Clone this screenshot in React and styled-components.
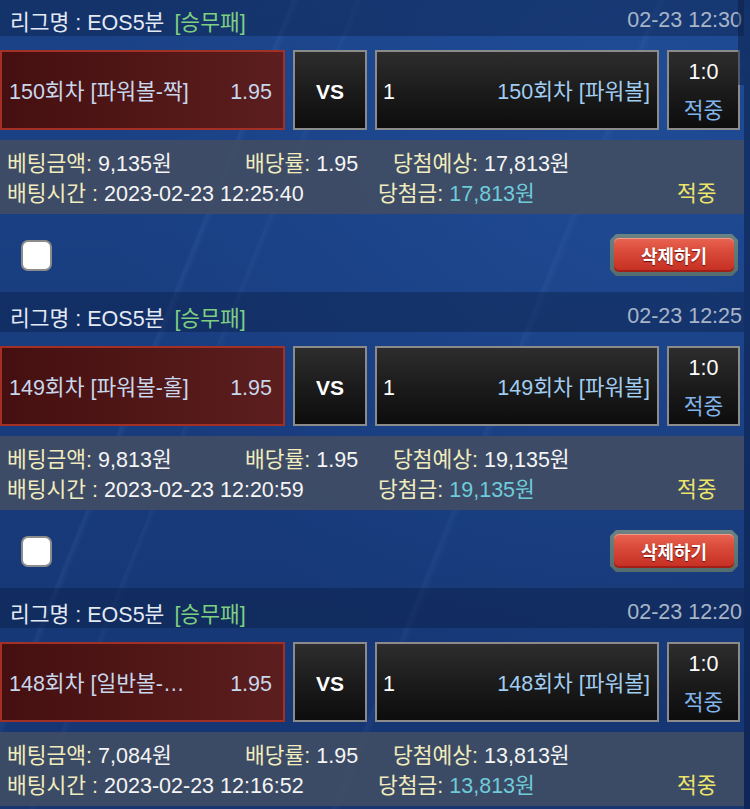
import React from 'react';
import styled, { createGlobalStyle } from 'styled-components';

const bets = [
  {
    id: 150,
    pick: '150회차 [파워볼-짝]',
    away: '150회차 [파워볼]',
    odds: '1.95',
    date: '02-23 12:30',
    amount: '9,135원',
    expected: '17,813원',
    time: '2023-02-23 12:25:40',
    payout: '17,813원'
  },
  {
    id: 149,
    pick: '149회차 [파워볼-홀]',
    away: '149회차 [파워볼]',
    odds: '1.95',
    date: '02-23 12:25',
    amount: '9,813원',
    expected: '19,135원',
    time: '2023-02-23 12:20:59',
    payout: '19,135원'
  },
  {
    id: 148,
    pick: '148회차 [일반볼-…',
    away: '148회차 [파워볼]',
    odds: '1.95',
    date: '02-23 12:20',
    amount: '7,084원',
    expected: '13,813원',
    time: '2023-02-23 12:16:52',
    payout: '13,813원'
  }
];

const GlobalStyle = createGlobalStyle`
  html, body {
    margin: 0;
    padding: 0;
    height: 100%;
    overflow: hidden;
    background: #163a78;
  }
  body {
    font-family: "Liberation Sans", "Noto Sans CJK KR", sans-serif;
  }
`;

export default function App() {
  return (
    <>
      <GlobalStyle />
      <Page>
        <List>
          {bets.map(bet => (
            <BetCard key={bet.id} bet={bet} />
          ))}
        </List>
        <ScrollTrack>
          <ScrollThumb />
        </ScrollTrack>
      </Page>
    </>
  );
}

function BetCard({ bet }) {
  return (
    <Card>
      <Header>
        <League>
          리그명 : EOS5분 <GameType>[승무패]</GameType>
        </League>
        <HeaderDate>{bet.date}</HeaderDate>
      </Header>
      <MatchRow>
        <TeamBox $variant="home">
          <span>{bet.pick}</span>
          <span>{bet.odds}</span>
        </TeamBox>
        <VsBox>VS</VsBox>
        <TeamBox $variant="away">
          <span>1</span>
          <AwayName>{bet.away}</AwayName>
        </TeamBox>
        <ScoreBox>
          <Score>1:0</Score>
          <ScoreResult>적중</ScoreResult>
        </ScoreBox>
      </MatchRow>
      <InfoPanel>
        <InfoRow $cols="238px 148px 1fr">
          <span>
            <Label>베팅금액:</Label> <Value>{bet.amount}</Value>
          </span>
          <span>
            <Label>배당률:</Label> <Value>{bet.odds}</Value>
          </span>
          <span>
            <Label>당첨예상:</Label> <Value>{bet.expected}</Value>
          </span>
        </InfoRow>
        <InfoRow $cols="371px 299px auto">
          <span>
            <Label>배팅시간 :</Label> <Value>{bet.time}</Value>
          </span>
          <span>
            <Label>당첨금:</Label> <Value $tone="payout">{bet.payout}</Value>
          </span>
          <Value $tone="hit">적중</Value>
        </InfoRow>
      </InfoPanel>
      <ActionRow>
        <Check type="checkbox" />
        <DeleteButton type="button">
          <DeleteFace>삭제하기</DeleteFace>
        </DeleteButton>
      </ActionRow>
    </Card>
  );
}

const Page = styled.div`
  display: flex;
  height: 100vh;
  overflow: hidden;
  position: relative;
  background:
    linear-gradient(112deg, transparent 27%, rgba(130, 175, 255, 0.08) 27.3%, transparent 27.9%),
    linear-gradient(112deg, transparent 33%, rgba(130, 175, 255, 0.05) 33.2%, transparent 33.8%),
    linear-gradient(112deg, transparent 61%, rgba(130, 175, 255, 0.06) 61.3%, transparent 62%),
    radial-gradient(ellipse at 85% 15%, rgba(40, 95, 180, 0.35), transparent 60%),
    linear-gradient(180deg, #1b4388 0%, #183b7c 55%, #163571 100%);
`;

const List = styled.div`
  flex: 1;
  display: flex;
  flex-direction: column;
  margin-top: -4px;
  min-width: 0;
`;

const ScrollTrack = styled.div`
  width: 6px;
  background: rgba(6, 22, 58, 0.45);
`;

const ScrollThumb = styled.div`
  position: absolute;
  top: 0;
  right: 6px;
  width: 6px;
  height: 85px;
  background: rgba(8, 24, 60, 0.45);
`;

const Card = styled.div`
  display: flex;
  flex-direction: column;
`;

const Header = styled.div`
  box-sizing: border-box;
  height: 40px;
  padding: 8px 2px 0 10px;
  display: flex;
  align-items: center;
  justify-content: space-between;
  background: rgba(6, 18, 48, 0.32);
  font-size: 21.5px;
`;

const League = styled.span`
  color: #e4eaf4;
`;

const GameType = styled.span`
  color: #7fcf80;
  margin-left: 4px;
`;

const HeaderDate = styled.span`
  color: #a9b5c7;
`;

const MatchRow = styled.div`
  display: grid;
  grid-template-columns: 285px 74px 284px 73px;
  column-gap: 8px;
  height: 80px;
  margin-top: 14px;
  font-size: 21.5px;
`;

const darkBox = `
  box-sizing: border-box;
  border: 2px solid #8b8b8b;
  background: linear-gradient(180deg, #2d2d2d 0%, #1a1a1a 55%, #0d0d0d 100%);
`;

const TeamBox = styled.div`
  box-sizing: border-box;
  display: flex;
  align-items: baseline;
  justify-content: space-between;
  line-height: 30px;
  white-space: nowrap;
  padding: ${p => (p.$variant === 'home' ? '25px 11px 0 7px' : '25px 7px 0 6px')};
  ${p =>
    p.$variant === 'home'
      ? `
    border: 2px solid #a33027;
    background: linear-gradient(90deg, #450f10 0%, #5c1e1e 100%);
    color: #c9d7ec;
  `
      : `
    ${darkBox}
    color: #ffffff;
  `}
`;

const AwayName = styled.span`
  color: #a0cdf1;
`;

const VsBox = styled.div`
  ${darkBox}
  display: flex;
  align-items: center;
  justify-content: center;
  padding-top: 4px;
  color: #ffffff;
  font-weight: bold;
  font-size: 21px;
`;

const ScoreBox = styled.div`
  ${darkBox}
  display: flex;
  flex-direction: column;
  align-items: center;
  padding-top: 6px;
`;

const Score = styled.span`
  line-height: 28px;
  color: #ffffff;
`;

const ScoreResult = styled.span`
  line-height: 28px;
  margin-top: 11px;
  color: #80b3ec;
`;

const InfoPanel = styled.div`
  box-sizing: border-box;
  height: 74px;
  margin-top: 10px;
  padding: 6px 0 0 7px;
  background: rgba(62, 76, 101, 0.96);
  font-size: 21.5px;
`;

const InfoRow = styled.div`
  display: grid;
  grid-template-columns: ${p => p.$cols};
  height: 30px;
  align-items: center;
  white-space: nowrap;
`;

const Label = styled.span`
  color: #f1ecbd;
`;

const Value = styled.span`
  color: ${p =>
    p.$tone === 'payout' ? '#6fcbd9' : p.$tone === 'hit' ? '#ece46b' : '#f5f5f5'};
`;

const ActionRow = styled.div`
  box-sizing: border-box;
  height: 78px;
  padding: 4px 6px 0 21px;
  display: flex;
  align-items: center;
  justify-content: space-between;
`;

const Check = styled.input`
  appearance: none;
  box-sizing: border-box;
  width: 31px;
  height: 31px;
  margin: 0;
  border: 2px solid #8c8c8c;
  border-radius: 7px;
  background: #ffffff;
`;

const DeleteButton = styled.button`
  box-sizing: border-box;
  width: 128px;
  height: 42px;
  padding: 4px;
  border: none;
  background: linear-gradient(180deg, #6b8282 0%, #566d6d 100%);
  clip-path: polygon(
    6px 0,
    calc(100% - 6px) 0,
    100% 6px,
    100% calc(100% - 6px),
    calc(100% - 6px) 100%,
    6px 100%,
    0 calc(100% - 6px),
    0 6px
  );
  cursor: pointer;
`;

const DeleteFace = styled.span`
  display: flex;
  align-items: center;
  justify-content: center;
  height: 100%;
  border-radius: 5px;
  background: linear-gradient(180deg, #ea6452 0%, #d94a39 40%, #c42e22 100%);
  box-shadow: inset 0 1px 0 rgba(255, 255, 255, 0.35),
    inset 0 -2px 0 rgba(120, 10, 10, 0.45);
  color: #ffffff;
  font-family: "Liberation Sans", "Noto Sans CJK KR", sans-serif;
  font-weight: bold;
  font-size: 18px;
  text-shadow: 0 1px 1px #6b1010;
`;
